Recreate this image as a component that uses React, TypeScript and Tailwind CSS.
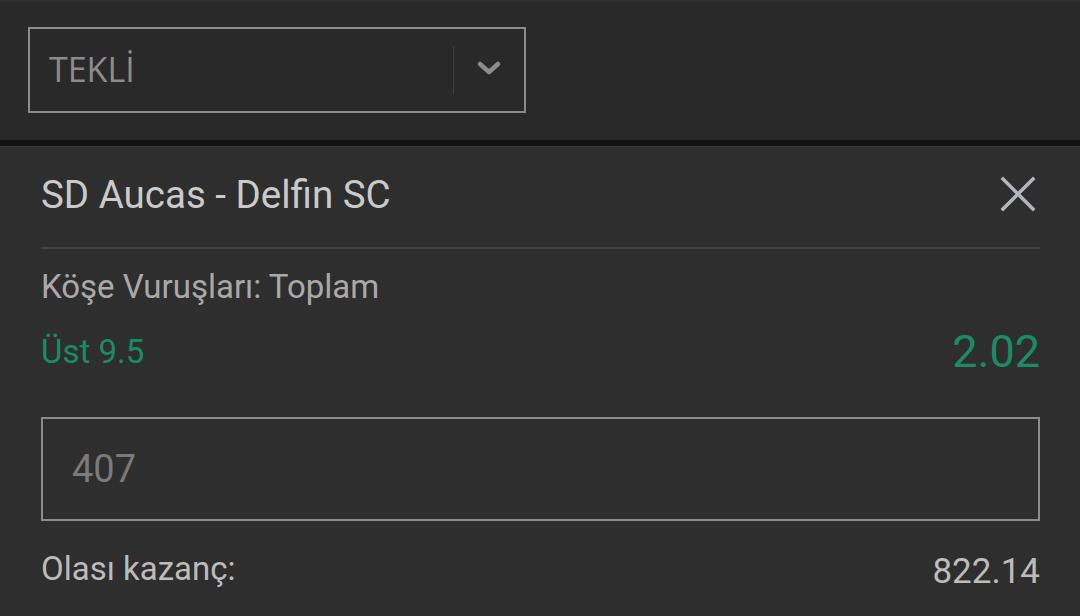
import React from "react";

export default function App() {
  return (
    <div className="w-[1080px] h-[616px] overflow-hidden bg-[#2e2e2e] flex flex-col" style={{ fontFamily: "Roboto, 'Liberation Sans', sans-serif" }}>
      <div className="h-[140px] bg-[#292929] border-t-2 border-[#2f2f2f] pl-[28px] pt-[25px] shrink-0">
        <div className="w-[498px] h-[86px] border-2 border-[#8c8c8c] flex items-center">
          <div className="flex-1 pl-[19px] text-[34px] text-[#8c8c8c] leading-none pb-[3px]" style={{ fontFamily: "'Open Sans', 'Noto Sans', sans-serif" }}>TEKLİ</div>
          <div className="w-px h-[48px] bg-[#3c3c3c]" />
          <div className="w-[70px] flex items-center justify-center pb-[4px]">
            <svg width="26" height="16" viewBox="0 0 26 16" fill="none">
              <path d="M4 4 L13 12 L22 4" stroke="#8c8c8c" strokeWidth="4.5" strokeLinecap="round" strokeLinejoin="round" />
            </svg>
          </div>
        </div>
      </div>
      <div className="h-[6px] bg-[#141210] shrink-0" />
      <div className="flex-1 border-t border-[#3a3a3a] pl-[41px] pr-[40px]">
        <div className="h-[102px] flex items-center justify-between border-b-2 border-[#444444]">
          <div className="text-[38.5px] leading-none text-[#cacaca] pb-[3px]">SD Aucas - Delfin SC</div>
          <svg width="36" height="36" viewBox="0 0 36 36" className="mr-[4px] mb-[6px]">
            <path d="M3 3 L33 33 M33 3 L3 33" stroke="#b3b6bd" strokeWidth="3.5" strokeLinecap="square" />
          </svg>
        </div>
        <div className="mt-[21px] text-[33px] leading-none text-[#a9a9a9]">Köşe Vuruşları: Toplam</div>
        <div className="mt-[26px] flex items-center justify-between h-[44px]">
          <div className="text-[33px] leading-none text-[#1c8a66]">Üst 9.5</div>
          <div className="text-[45px] leading-none text-[#1c8a66]">2.02</div>
        </div>
        <div className="mt-[44px] h-[104px] border-2 border-[#8c8c8c] flex items-center pl-[29px]">
          <span className="text-[38px] leading-none text-[#7a7a7a]">407</span>
        </div>
        <div className="mt-[27px] flex items-center justify-between">
          <div className="text-[33px] leading-none text-[#bcbcbc]">Olası kazanç:</div>
          <div className="text-[35px] leading-none text-[#bcbcbc] pt-[6px]">822.14</div>
        </div>
      </div>
    </div>
  );
}
